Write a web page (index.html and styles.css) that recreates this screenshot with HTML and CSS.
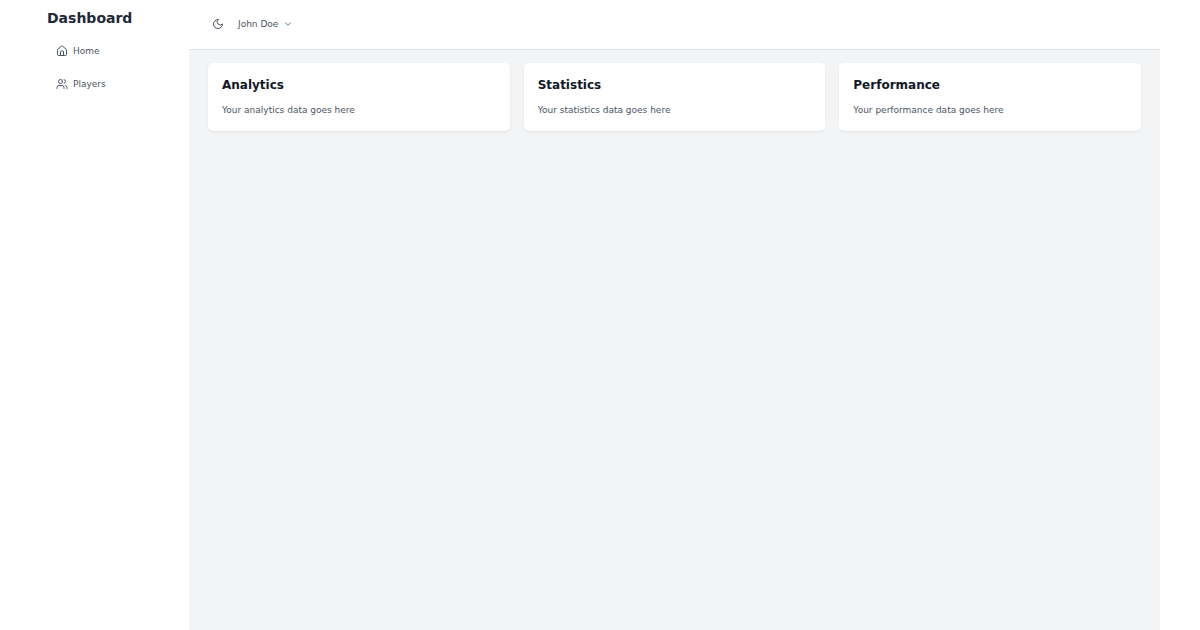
FILE: index.html
```html
<!DOCTYPE html>
<html lang="en">
<head>
    <meta charset="UTF-8">
    <meta name="viewport" content="width=device-width, initial-scale=1.0">
    <title>Dashboard</title>
    <link rel="stylesheet" href="styles.css">
</head>
<body>
    <div class="layout">
        <aside class="sidebar">
            <h1 class="brand">Dashboard</h1>
            <nav class="menu">
                <a href="#" class="menu-link">
                    <svg class="icon" viewBox="0 0 24 24" aria-hidden="true">
                        <path d="M15 21v-8a1 1 0 0 0-1-1h-4a1 1 0 0 0-1 1v8"/>
                        <path d="M3 10a2 2 0 0 1 .709-1.528l7-5.999a2 2 0 0 1 2.582 0l7 5.999A2 2 0 0 1 21 10v9a2 2 0 0 1-2 2H5a2 2 0 0 1-2-2z"/>
                    </svg>
                    <span>Home</span>
                </a>
                <a href="#" class="menu-link">
                    <svg class="icon" viewBox="0 0 24 24" aria-hidden="true">
                        <path d="M16 21v-2a4 4 0 0 0-4-4H6a4 4 0 0 0-4 4v2"/>
                        <circle cx="9" cy="7" r="4"/>
                        <path d="M22 21v-2a4 4 0 0 0-3-3.87"/>
                        <path d="M16 3.13a4 4 0 0 1 0 7.75"/>
                    </svg>
                    <span>Players</span>
                </a>
            </nav>
        </aside>

        <div class="content">
            <header class="topbar">
                <button type="button" class="theme-button" aria-label="Toggle dark mode">
                    <svg class="icon" viewBox="0 0 24 24" aria-hidden="true">
                        <path d="M12 3a6 6 0 0 0 9 9 9 9 0 1 1-9-9Z"/>
                    </svg>
                </button>
                <button type="button" class="user-button">
                    <span>John Doe</span>
                    <svg class="icon icon-small" viewBox="0 0 24 24" aria-hidden="true">
                        <path d="m6 9 6 6 6-6"/>
                    </svg>
                </button>
            </header>

            <main class="cards">
                <section class="card">
                    <h2>Analytics</h2>
                    <p>Your analytics data goes here</p>
                </section>
                <section class="card">
                    <h2>Statistics</h2>
                    <p>Your statistics data goes here</p>
                </section>
                <section class="card">
                    <h2>Performance</h2>
                    <p>Your performance data goes here</p>
                </section>
            </main>
        </div>
    </div>
</body>
</html>
```
FILE: styles.css
```css
* {
    box-sizing: border-box;
}

body {
    margin: 0;
    font-family: "DejaVu Sans", sans-serif;
    font-size: 9px;
    line-height: 14px;
    color: #4b5563;
    background-color: #fff;
}

h1, h2, p {
    margin: 0;
}

button {
    font: inherit;
    color: inherit;
    background: none;
    border: none;
    cursor: pointer;
}

.layout {
    display: flex;
    min-height: 100vh;
    padding: 0 40px;
}

.sidebar {
    flex: 0 0 149px;
    padding: 9px 7px;
}

.brand {
    font-size: 14px;
    line-height: 19px;
    color: #1f2937;
}

.menu {
    display: flex;
    flex-direction: column;
    gap: 5px;
    margin-top: 9px;
}

.menu-link {
    display: flex;
    align-items: center;
    gap: 5px;
    padding: 7px 9px;
    color: #4b5563;
    text-decoration: none;
}

.icon {
    display: block;
    width: 12px;
    height: 12px;
    fill: none;
    stroke: currentColor;
    stroke-width: 2;
    stroke-linecap: round;
    stroke-linejoin: round;
}

.icon-small {
    width: 10px;
    height: 10px;
}

.content {
    flex: 1;
    min-width: 0;
    background-color: #f3f4f6;
}

.topbar {
    display: flex;
    align-items: center;
    gap: 9px;
    padding: 13px 19px 14px;
    background-color: #fff;
    border-bottom: 1px solid #dcdfe3;
}

.theme-button {
    padding: 5px 4px;
}

.user-button {
    display: flex;
    align-items: center;
    gap: 5px;
    padding: 0 1px;
}

.cards {
    display: grid;
    grid-template-columns: repeat(3, 1fr);
    gap: 14px;
    padding: 13px 19px;
}

.card {
    padding: 14px;
    background-color: #fff;
    border-radius: 5px;
    box-shadow: 0 1px 2px rgba(0, 0, 0, 0.08);
}

.card h2 {
    margin-bottom: 9px;
    font-size: 12px;
    line-height: 17px;
    color: #111827;
}

@media (max-width: 700px) {
    .layout {
        flex-direction: column;
        padding: 0;
    }

    .sidebar {
        flex-basis: auto;
    }

    .cards {
        grid-template-columns: 1fr;
    }
}
```
